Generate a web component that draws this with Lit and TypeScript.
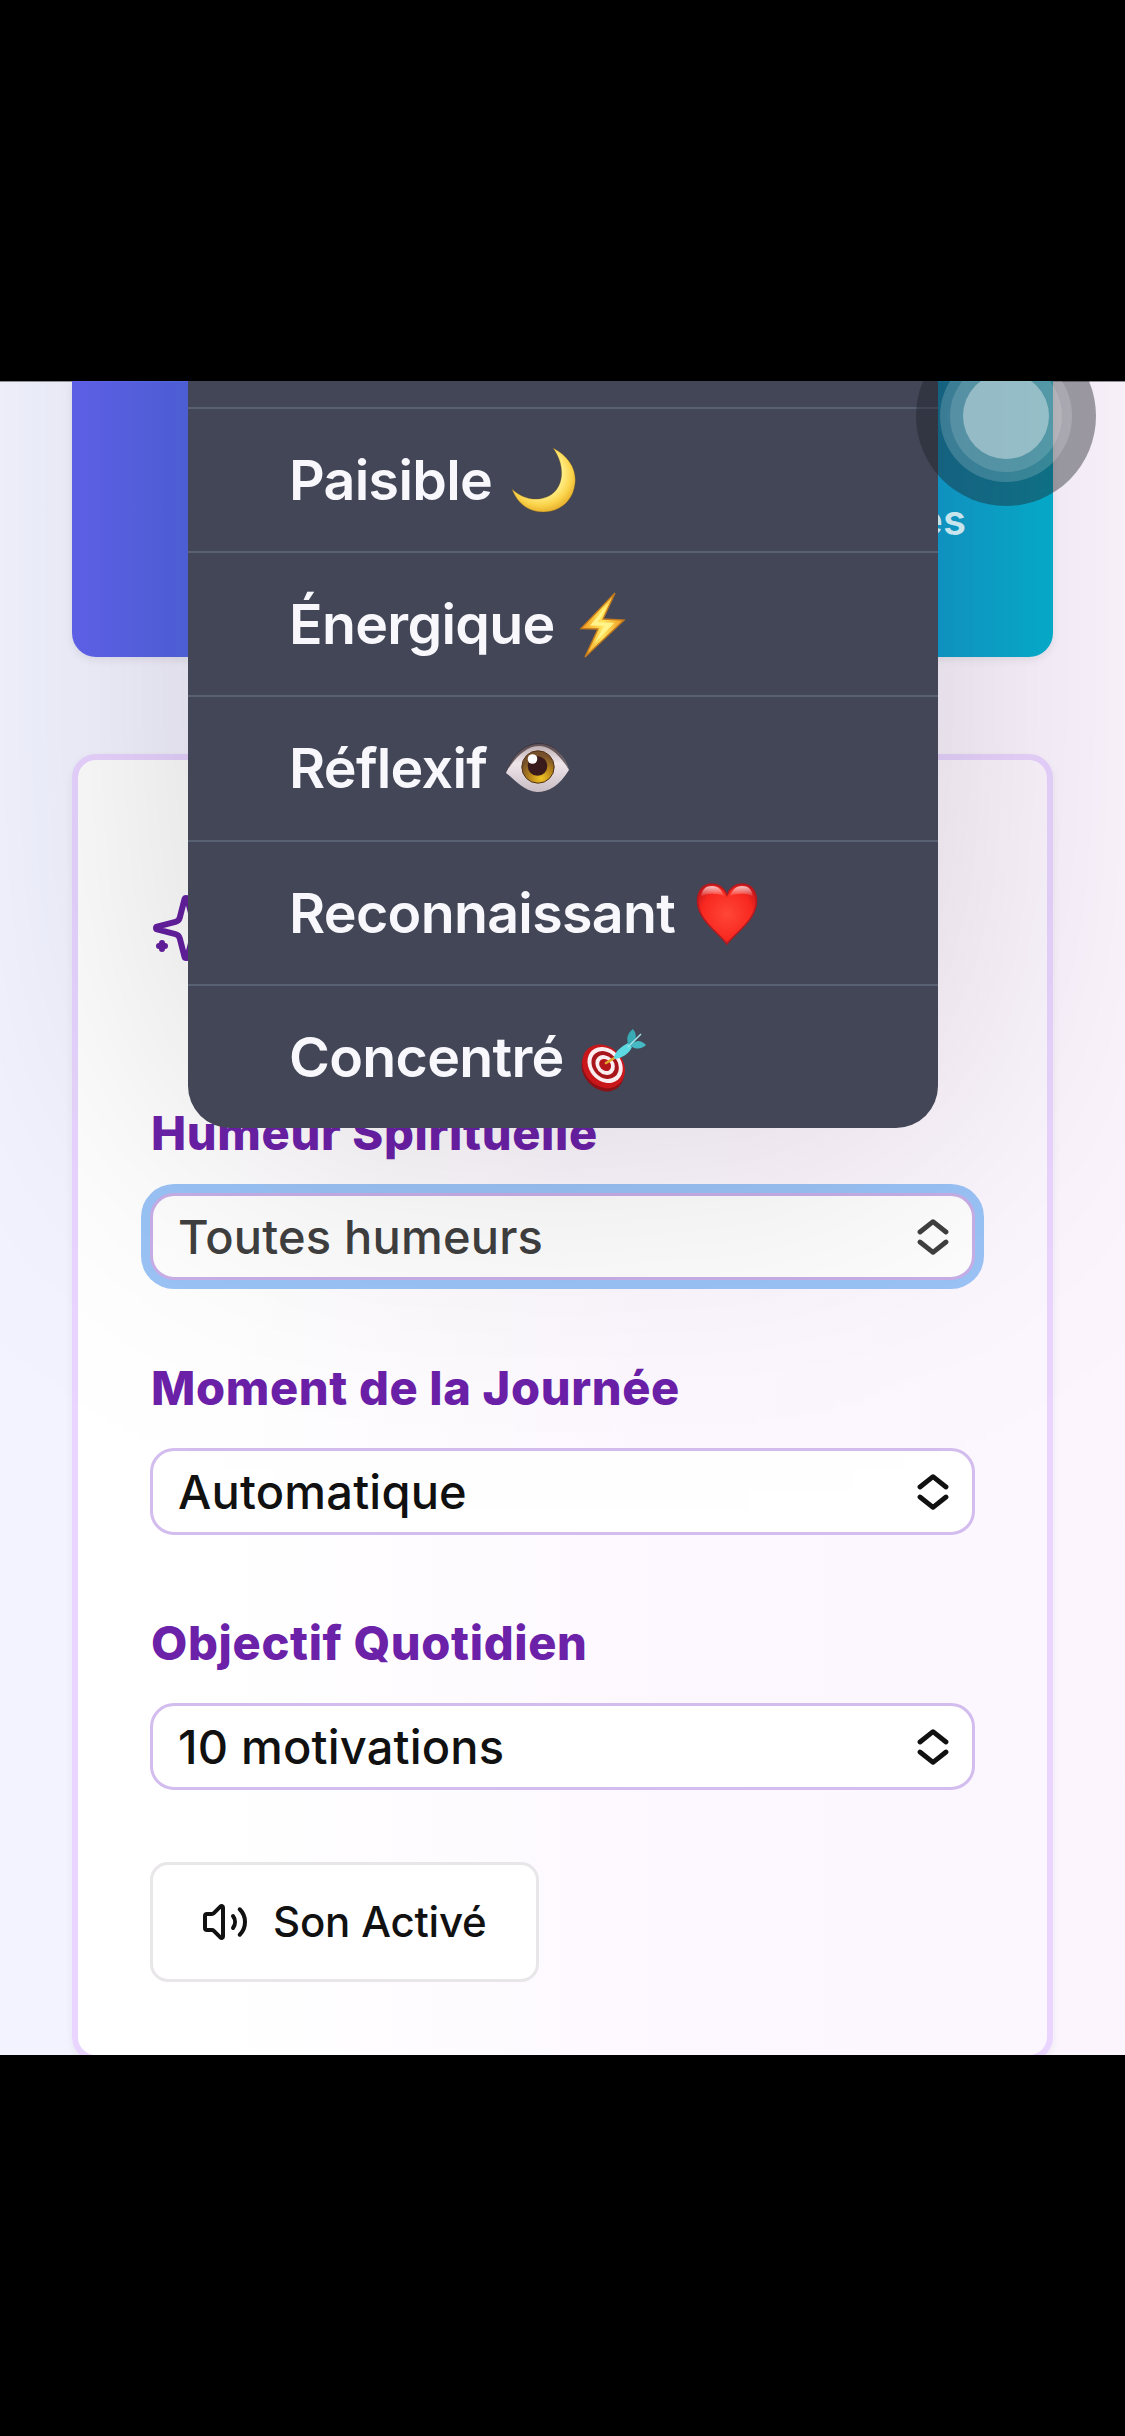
import { LitElement, html, css, svg, type TemplateResult } from "lit";
import { customElement, property } from "lit/decorators.js";
import { classMap } from "lit/directives/class-map.js";

const moon = svg`
  <defs>
    <radialGradient id="mg" cx="45%" cy="40%" r="62%">
      <stop offset="0.55" stop-color="#fff08a"/><stop offset="0.8" stop-color="#fbd34a"/><stop offset="1" stop-color="#e5ad2c"/>
    </radialGradient>
  </defs>
  <path d="M44 2 C60 10 68 24 66 38 C64 55 51 66 34 66 C19 66 8 57 3 43 C13 53 28 56 40 50 C55 42 57 20 44 2Z" fill="url(#mg)" stroke="#7a5a1c" stroke-opacity=".45" stroke-width=".8"/>`;

const bolt = svg`
  <defs>
    <linearGradient id="bg" x1="0" y1="0" x2="1" y2="0">
      <stop offset="0" stop-color="#f39a1d"/><stop offset="0.5" stop-color="#ffe45c"/><stop offset="1" stop-color="#ef9a24"/>
    </linearGradient>
  </defs>
  <path d="M44 3 L10 38.500 L27 39 L14 67 L53 30 L32 29Z" fill="url(#bg)" stroke="#c47a1c" stroke-width="1.400"/>
  <path d="M38 13 L19 35.500 L33 36 L23 54 L43 33 L27 32Z" fill="#fff38a"/>`;

const eye = svg`
  <defs>
    <linearGradient id="ew" x1="0" y1="0" x2="0" y2="1">
      <stop offset="0" stop-color="#b9a9ac"/><stop offset="0.4" stop-color="#efe6ea"/><stop offset="1" stop-color="#c9bcc4"/>
    </linearGradient>
    <radialGradient id="ei" cx="60%" cy="85%" r="70%">
      <stop offset="0" stop-color="#efc424"/><stop offset="0.5" stop-color="#b9861a"/><stop offset="1" stop-color="#76502a"/>
    </radialGradient>
  </defs>
  <path d="M2 39 C10 19 22 10 35 10 C49 10 60 20 65 36 C55 52 45 58 33 58 C19 57 9 44 2 39Z" fill="url(#ew)"/>
  <path d="M2 38 C9 19 22 9 35 9 C49 9 60 20 65 36 C56 21 46 12 35 12 C22 12 11 24 2 38Z" fill="#3a2c30" fill-opacity=".7"/>
  <circle cx="34" cy="33" r="16.200" fill="url(#ei)" stroke="#513217" stroke-width="1"/>
  <circle cx="33.500" cy="32" r="9.800" fill="#3a1b1c"/>
  <circle cx="28.500" cy="25" r="4.800" fill="#fff"/>`;

const heart = svg`
  <defs>
    <radialGradient id="hg" cx="50%" cy="50%" r="60%">
      <stop offset="0" stop-color="#ff4638"/><stop offset="0.7" stop-color="#f8281f"/><stop offset="1" stop-color="#c91518"/>
    </radialGradient>
    <linearGradient id="hs" x1="0" y1="0" x2="0" y2="1">
      <stop offset="0" stop-color="#fff" stop-opacity=".75"/><stop offset="1" stop-color="#fff" stop-opacity="0"/>
    </linearGradient>
  </defs>
  <path d="M35 65 C27 54 5.500 41 5.500 22 C5.500 11 12 5 20 5 C27 5 32 9 35 16 C38 9 43 5 50 5 C58 5 64.500 11 64.500 22 C64.500 41 43 54 35 65Z" fill="url(#hg)" stroke="#b01a20" stroke-width="1.600"/>
  <path d="M9 18 C10 10 14 7 20 7 C26 7 30 11 32 17 C24 14 14 14 9 18Z" fill="url(#hs)"/>
  <path d="M61 18 C60 10 56 7 50 7 C44 7 40 11 38 17 C46 14 56 14 61 18Z" fill="url(#hs)"/>`;

const dart = svg`
  <g transform="translate(0 3) rotate(48 24 40)">
    <ellipse cx="26" cy="43.500" rx="23.500" ry="19" fill="#8f1014"/>
    <ellipse cx="24" cy="40.500" rx="23.500" ry="19.500" fill="#c9161b"/>
    <ellipse cx="24" cy="38.500" rx="19.500" ry="16" fill="#fbeef0"/>
    <ellipse cx="24" cy="38.500" rx="15.200" ry="12.300" fill="#a8151b"/>
    <ellipse cx="24" cy="38.500" rx="10.800" ry="8.800" fill="#fbeef0"/>
    <ellipse cx="24" cy="38.500" rx="6.600" ry="5.400" fill="#b5161b"/>
  </g>
  <path d="M26 40 L36 34" stroke="#e0a92a" stroke-width="2.600" stroke-linecap="round"/>
  <path d="M34 35 C35 28 41 24 48 20 L52 24 C49 31 42 35 35 36Z" fill="#5cd9e2"/>
  <path d="M48 21 C46 14 48 10 53 6 C57 11 57 16 52 23Z" fill="#39a9b4"/>
  <path d="M51 23 C55 17 60 16 66 22 C62 26 56 27 51 23Z" fill="#45b9c4"/>
  <path d="M48 24 L61 11" stroke="#a9e6ec" stroke-width="1.500"/>`;

interface Mood {
  label: string;
  name: string;
  art: TemplateResult<2>;
}

const MOODS: Mood[] = [
  { label: "Paisible", name: "paisible", art: moon },
  { label: "Énergique", name: "energique", art: bolt },
  { label: "Réflexif", name: "reflexif", art: eye },
  { label: "Reconnaissant", name: "reconnaissant", art: heart },
  { label: "Concentré", name: "concentre", art: dart },
];

@customElement("select-field")
export class SelectField extends LitElement {
  @property() label = "";
  @property() value = "";
  @property({ type: Boolean }) active = false;

  static styles = css`
    :host { display: flex; flex-direction: column; gap: 30px; }
    .label { font-size: 47px; line-height: 60px; font-weight: 800; color: #6b21a8; white-space: nowrap; letter-spacing: 0.65px; padding-left: 1px; }
    .box {
      box-sizing: border-box; height: 87px; border: 3px solid #d3bcee; border-radius: 24px; background: #fff;
      display: flex; align-items: center; justify-content: space-between; padding: 0 23px 0 25px;
      font-size: 47px; line-height: 60px; font-weight: 550; color: #111; white-space: nowrap; letter-spacing: 0.2px;
    }
    .box.active { color: #404040; border-color: #c9afe8; box-shadow: 0 0 0 9px #9bc4f7; }
    .chev { width: 32px; height: 38px; display: block; }
  `;

  render() {
    return html`
      <div class="label">${this.label}</div>
      <div class=${classMap({ box: true, active: this.active })}>
        <span>${this.value}</span>
        <svg class="chev" viewBox="0 0 32 38" fill="none" stroke="currentColor" stroke-width="4.800" stroke-linecap="round" stroke-linejoin="round">
          <path d="M3 14 L16 3.700 L29 14"/><path d="M3 24 L16 34.300 L29 24"/>
        </svg>
      </div>`;
  }
}

@customElement("mood-menu")
export class MoodMenu extends LitElement {
  static styles = css`
    :host { display: block; box-sizing: border-box; border-radius: 0 0 42px 42px; overflow: hidden; background: #434656; }
    .stub { height: 26px; border-bottom: 2px solid #586074; }
    .row {
      box-sizing: border-box; height: 144.2px; border-bottom: 2px solid #586074; padding: 0 0 0 101px;
      display: flex; align-items: center; color: #f7f7fc; font-size: 55.5px; line-height: 70px; font-weight: 600;
      white-space: nowrap; letter-spacing: -0.7px;
    }
    .row:last-child { border-bottom: 0; height: 142.500px; }
    .art { width: 70px; height: 70px; margin: 2px 0 0 16.500px; }
  `;

  render() {
    return html`
      <div class="stub"></div>
      ${MOODS.map((m) => html`
        <div class="row ${m.name}">
          <span>${m.label}</span>
          <svg class="art" viewBox="0 0 70 70">${m.art}</svg>
        </div>`)}`;
  }
}

@customElement("app-root")
export class AppRoot extends LitElement {
  static styles = css`
    :host {
      display: block; box-sizing: border-box; height: 2436px; padding-top: 381px; background: #000;
      font-family: Inter, "Liberation Sans", sans-serif;
    }
    .view {
      position: relative; box-sizing: border-box; height: 1674px; overflow: hidden; padding: 0 72px;
      background: linear-gradient(#8f8f98, #8f8f98) 0 0 / 100% 1px no-repeat, linear-gradient(90deg, #f2f3ff, #fcf5fe);
    }
    .banner {
      box-sizing: border-box; height: 276px; border-radius: 0 0 24px 24px; padding: 114px 87px 0 0; text-align: right;
      background: linear-gradient(90deg, #6163ee, #5266e4 12%, #119ecf 88%, #05b0ce);
      box-shadow: 0 3px 9px rgba(0, 0, 0, 0.08);
      color: #d8f8ff; font-size: 42px; line-height: 50px; font-weight: 600;
    }
    .card {
      box-sizing: border-box; margin-top: 97px; height: 1307px; border: 6px solid #e9d5ff; border-radius: 24px;
      background: linear-gradient(90deg, #fff 15%, #fdf8ff 60%, #fcf6fe);
      box-shadow: 0 3px 9px rgba(0, 0, 0, 0.06);
      padding: 132px 72px 0; display: flex; flex-direction: column;
    }
    .spark { display: block; width: 72px; height: 72px; color: #6420a0; }
    .fields { display: flex; flex-direction: column; gap: 78px; margin-top: 139px; }
    .sound {
      box-sizing: border-box; margin-top: 72px; width: 389px; height: 120px; border: 3px solid #e8e6e8; border-radius: 18px;
      background: #fff; padding-left: 48px; display: flex; align-items: center; gap: 24px;
      font-size: 42px; line-height: 60px; font-weight: 550; color: #111; white-space: nowrap; letter-spacing: -0.2px;
    }
    .sound svg { width: 48px; height: 48px; }
    .shade {
      position: absolute; inset: 1px 0 0; background: rgba(12, 0, 18, 0.165);
      mask-image:
        linear-gradient(90deg, rgba(0,0,0,.127) 0, rgba(0,0,0,.284) 94px, rgba(0,0,0,.5) 188px, rgba(0,0,0,.716) 282px, rgba(0,0,0,.873) 376px, rgba(0,0,0,.977) 563px, rgba(0,0,0,.873) 750px, rgba(0,0,0,.716) 844px, rgba(0,0,0,.5) 938px, rgba(0,0,0,.284) 1032px, rgba(0,0,0,.13) 1125px),
        linear-gradient(180deg, #000 340px, rgba(0,0,0,.977) 417px, rgba(0,0,0,.929) 505px, rgba(0,0,0,.841) 582px, rgba(0,0,0,.69) 665px, rgba(0,0,0,.5) 747px, rgba(0,0,0,.31) 829px, rgba(0,0,0,.159) 912px, rgba(0,0,0,.067) 995px, rgba(0,0,0,.023) 1077px, transparent 1200px);
      mask-composite: intersect;
    }
    mood-menu { position: absolute; left: 188px; top: 0; width: 750px; }
    .touch { position: absolute; left: 916px; top: -55px; width: 180px; height: 180px; }
  `;

  render() {
    return html`
      <div class="view">
        <div class="banner">es</div>
        <div class="card">
          <svg class="spark" viewBox="0 0 24 24" fill="none" stroke="currentColor" stroke-width="2" stroke-linecap="round" stroke-linejoin="round">
            <path d="M9.937 15.500A2 2 0 0 0 8.500 14.063l-6.135-1.582a.5.5 0 0 1 0-.962L8.500 9.936A2 2 0 0 0 9.937 8.500l1.582-6.135a.5.5 0 0 1 .963 0L14.063 8.500A2 2 0 0 0 15.500 9.937l6.135 1.581a.5.5 0 0 1 0 .964L15.500 14.063a2 2 0 0 0-1.437 1.437l-1.582 6.135a.5.5 0 0 1-.963 0z"/>
            <path d="M20 3v4M22 5h-4M4 17v2M5 18H3"/>
          </svg>
          <div class="fields">
            <select-field label="Humeur Spirituelle" value="Toutes humeurs" active></select-field>
            <select-field label="Moment de la Journée" value="Automatique"></select-field>
            <select-field label="Objectif Quotidien" value="10 motivations"></select-field>
          </div>
          <div class="sound">
            <svg viewBox="0 0 24 24" fill="none" stroke="currentColor" stroke-width="2" stroke-linecap="round" stroke-linejoin="round">
              <path d="M11 4.702a.705.705 0 0 0-1.203-.498L6.413 7.587A1.400 1.400 0 0 1 5.416 8H3a1 1 0 0 0-1 1v6a1 1 0 0 0 1 1h2.416a1.400 1.400 0 0 1 .997.413l3.383 3.384A.705.705 0 0 0 11 19.298z"/>
              <path d="M16 9a5 5 0 0 1 0 6"/><path d="M19.364 18.364a9 9 0 0 0 0-12.728"/>
            </svg>
            <span>Son Activé</span>
          </div>
        </div>
        <div class="shade"></div>
        <mood-menu></mood-menu>
        <svg class="touch" viewBox="0 0 180 180">
          <circle cx="90" cy="90" r="90" fill="#1c2228" fill-opacity=".42"/>
          <circle cx="90" cy="90" r="66" fill="#fff" fill-opacity=".17"/>
          <circle cx="90" cy="90" r="56" fill="#fff" fill-opacity=".14"/>
          <circle cx="90" cy="90" r="43" fill="#fff" fill-opacity=".38"/>
        </svg>
      </div>`;
  }
}
